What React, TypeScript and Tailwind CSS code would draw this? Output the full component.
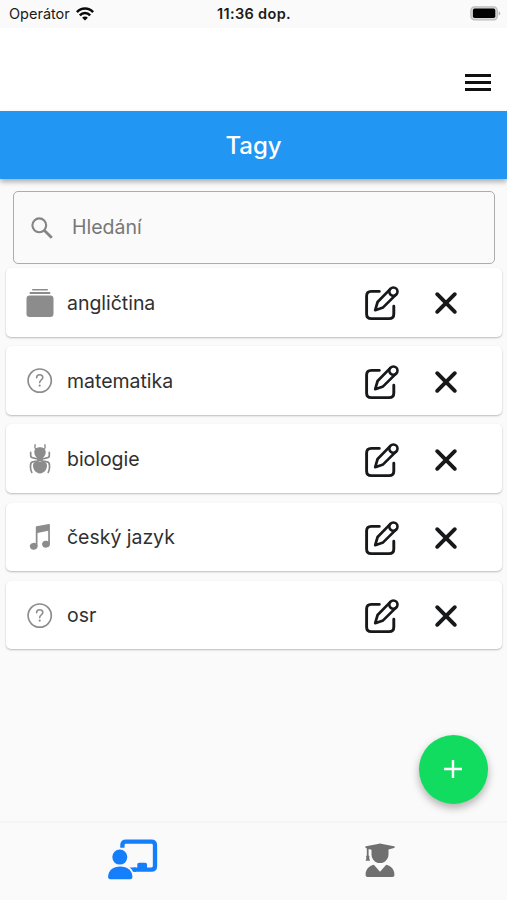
import React, { useState } from 'react';

const initialTags = [
  { id: 1, name: 'angličtina', icon: 'cards' },
  { id: 2, name: 'matematika', icon: 'question' },
  { id: 3, name: 'biologie', icon: 'bug' },
  { id: 4, name: 'český jazyk', icon: 'music' },
  { id: 5, name: 'osr', icon: 'question' },
];

function WifiIcon() {
  return (
    <svg width="18" height="14" viewBox="0 0 18 14" fill="none" stroke="#0a0a0a" strokeWidth="2.5">
      <path d="M0.9 5.1C5.4 0.3 12.6 0.3 17.1 5.1" />
      <path d="M3.8 8.4C6.7 5.3 11.3 5.3 14.2 8.4" />
      <path d="M9 13.6L6.1 10.7C7.7 9.1 10.3 9.1 11.9 10.7Z" fill="#0a0a0a" stroke="none" />
    </svg>
  );
}

function BatteryIcon() {
  return (
    <svg width="31" height="15" viewBox="0 0 31 15">
      <rect x="0.9" y="0.9" width="26.4" height="13" rx="3.6" fill="#d8d8d8" stroke="#bcbcbc" strokeWidth="1.3" />
      <rect x="2.9" y="2.6" width="22.4" height="9.4" rx="1.8" fill="#000" />
      <path d="M28.6 5.2C30.9 6 30.9 8.8 28.6 9.6Z" fill="#b5b5b5" />
    </svg>
  );
}

function EditIcon() {
  return (
    <svg width="36" height="36" viewBox="0 0 36 36" fill="none" stroke="#17181a" strokeWidth="2.9" strokeLinecap="round" strokeLinejoin="round">
      <path d="M15.3 6.4H7.3C4.4 6.4 2.6 8.2 2.6 11.1V28.9C2.6 31.8 4.4 33.6 7.3 33.6H25.1C28 33.6 29.8 31.8 29.8 28.9V21.2" />
      <path d="M26.2 4.1L13.6 17L11.2 25.2L19.1 22.4L32 9.6" strokeWidth="2.7" />
      <circle cx="29.4" cy="6.6" r="4.1" strokeWidth="2.6" />
    </svg>
  );
}

function CloseIcon() {
  return (
    <svg width="24" height="24" viewBox="0 0 24 24" fill="none" stroke="#17181a" strokeWidth="3.9" strokeLinecap="round">
      <path d="M3.2 3.2L20.8 20.8M20.8 3.2L3.2 20.8" />
    </svg>
  );
}

function TagIcon({ type }: { type: string }) {
  if (type === 'cards') {
    return (
      <svg width="28" height="30" viewBox="0 0 28 30" fill="#8c8c8c">
        <rect x="6" y="1" width="16" height="1.5" rx="0.7" />
        <rect x="3.5" y="4.1" width="21" height="1.8" rx="0.9" />
        <rect x="0.5" y="7.6" width="27" height="21.4" rx="3.2" />
      </svg>
    );
  }
  if (type === 'bug') {
    return (
      <svg width="28" height="30" viewBox="0 0 28 30" fill="#8c8c8c">
        <path d="M9.2 0.8C8.2 4.2 9.8 5.3 11.7 5.6M18.8 0.8C19.8 4.2 18.2 5.3 16.3 5.6" fill="none" stroke="#8c8c8c" strokeWidth="1.4" strokeLinecap="round" />
        <path
          d="M4.7 8.4V11.8C4.7 13.4 5.8 13.9 8 14.1L12 15M23.3 8.4V11.8C23.3 13.4 22.2 13.9 20 14.1L16 15M12 17.2L7.5 17.7C5.2 17.9 4.5 19.2 4.5 21.4V23.3C4.5 25.4 5 27.3 5.8 28.4M16 17.2L20.5 17.7C22.8 17.9 23.5 19.2 23.5 21.4V23.3C23.5 25.4 23 27.3 22.2 28.4"
          fill="none"
          stroke="#8c8c8c"
          strokeWidth="1.7"
          strokeLinecap="round"
        />
        <path d="M14 3.3C17.2 3.3 19.7 5 19.7 8C19.7 10 19 12.3 17.3 13.4L16.3 17.5H11.7L10.7 13.4C9 12.3 8.3 10 8.3 8C8.3 5 10.8 3.3 14 3.3Z" />
        <path d="M14 18C17.6 17.2 21 17.6 21 21.2C21 26 17.6 29.4 14 29.4C10.4 29.4 7 26 7 21.2C7 17.6 10.4 17.2 14 18Z" />
      </svg>
    );
  }
  if (type === 'music') {
    return (
      <svg width="28" height="30" viewBox="0 0 28 30" fill="#8c8c8c">
        <path d="M9.8 5.1Q9.8 4.4 10.6 4.2L22.9 2Q23.9 1.9 23.9 2.8V22H22.2V8.8L11.5 11V24.2H9.8Z" />
        <ellipse cx="7.7" cy="24.3" rx="3.9" ry="3.4" transform="rotate(-12 7.7 24.3)" />
        <ellipse cx="20" cy="22.2" rx="3.9" ry="3.4" transform="rotate(-12 20 22.2)" />
      </svg>
    );
  }
  return (
    <svg width="28" height="30" viewBox="0 0 28 30" fill="none" stroke="#8c8c8c" strokeLinecap="round">
      <circle cx="13.7" cy="14.6" r="11.6" strokeWidth="1.7" />
      <path d="M10.6 11.8C10.6 9.9 11.9 8.8 13.7 8.8C15.5 8.8 16.8 9.9 16.8 11.5C16.8 13.7 13.7 13.9 13.7 16.6" strokeWidth="1.6" />
      <circle cx="13.7" cy="19.6" r="1.1" fill="#8c8c8c" stroke="none" />
    </svg>
  );
}

function TeacherIcon() {
  return (
    <svg width="50" height="41" viewBox="0 0 50 41" fill="#157efb">
      <path d="M14.4 8.8V6.2C14.4 4 15.8 2.7 18 2.7H43.4C45.6 2.7 47 4 47 6.2V27C47 29.2 45.6 30.6 43.4 30.6H25.4" fill="none" stroke="#157efb" strokeWidth="4.3" />
      <path d="M29.3 31V25.6C29.3 24.4 30 23.7 31.2 23.7H37.1C38.3 23.7 39 24.4 39 25.6V31Z" />
      <path d="M21.5 28.4H28V32.7H25C24.2 30.8 23.1 29.3 21.5 28.4Z" />
      <circle cx="11.8" cy="18.1" r="7.5" />
      <path d="M0.1 38C0.1 31.3 5.3 27.4 12.2 27.4C19.1 27.4 24.4 31.3 24.4 38C24.4 39.4 23.7 40.2 22.3 40.2H2.2C0.8 40.2 0.1 39.4 0.1 38Z" />
    </svg>
  );
}

function GraduateIcon() {
  return (
    <svg width="30" height="35" viewBox="0 0 30 35" fill="#707070">
      <path d="M1 3.3L14.2 0.7C14.9 0.5 15.3 0.5 16 0.7L29 3.3C30 3.6 30 4.8 29 5.1L23.5 6.5V11.4C23.5 16.2 19.7 20 15 20C10.3 20 6.5 16.2 6.5 11.4V6.7L3.6 6V12.6C4.6 13.4 4.6 14.2 4.2 15L5 17.8H0.6L1.5 15C0.8 14.2 0.9 13.3 1.8 12.6V5.5L1 5.1C0.1 4.8 0.1 3.6 1 3.3Z" />
      <path d="M8.9 21.8L15 28.7L21.2 21.8C26 22.6 29.4 26.7 29.4 31.4V32.1C29.4 33.3 28.6 34.1 27.4 34.1H2.6C1.4 34.1 0.6 33.3 0.6 32.1V31.4C0.6 26.7 4.1 22.6 8.9 21.8Z" />
    </svg>
  );
}

export default function App() {
  const [tags, setTags] = useState(initialTags);
  const [search, setSearch] = useState('');

  const filtered = tags.filter(t => t.name.toLowerCase().includes(search.toLowerCase()));

  return (
    <div className="flex flex-col h-screen w-full bg-[#fafafa] overflow-hidden font-['Inter',sans-serif] text-[#303030]">
      <div className="grid grid-cols-3 items-center h-7 shrink-0 pl-[9px] pr-[6px] text-[#1b1b1b]">
        <div className="flex items-center gap-[6px]">
          <span className="text-[14.5px]">Operátor</span>
          <WifiIcon />
        </div>
        <span className="text-center text-[14.5px] font-semibold tracking-[0.35px] whitespace-nowrap pr-[2px]">11:36 dop.</span>
        <div className="flex justify-end pb-[2px]">
          <BatteryIcon />
        </div>
      </div>

      <div className="flex justify-end items-start h-[83px] shrink-0 bg-white pr-4 pt-[46px]">
        <button title="Menu" className="flex flex-col gap-1">
          <span className="block w-[26px] h-[3px] bg-[#101010]" />
          <span className="block w-[26px] h-[3px] bg-[#101010]" />
          <span className="block w-[26px] h-[3px] bg-[#101010]" />
        </button>
      </div>

      <header className="flex items-center justify-center h-[68px] shrink-0 bg-[#2196f3] pt-[2px] shadow-[0_3px_5px_rgba(0,0,0,0.3)]">
        <h1 className="text-white text-[24px] font-medium">Tagy</h1>
      </header>

      <main className="flex-1 min-h-0 flex flex-col">
        <label className="flex items-center ml-[13px] mr-[12px] mt-[12px] h-[73px] shrink-0 border-[1.5px] border-[#acacac] rounded-[5px]">
          <svg className="ml-[17px] shrink-0" width="22" height="22" viewBox="0 0 22 22" fill="none" stroke="#858585" strokeWidth="2.1">
            <circle cx="8.3" cy="8.3" r="6.9" />
            <path d="M13.4 13.4L20.8 20.8" strokeWidth="2.8" />
          </svg>
          <input
            type="text"
            placeholder="Hledání"
            value={search}
            onChange={(e) => setSearch(e.target.value)}
            className="ml-[19px] flex-1 min-w-0 text-[19.5px] placeholder:text-[#777] focus:outline-none"
          />
        </label>

        <div className="flex flex-col gap-[9.5px] pl-[6px] pr-[5px] mt-[4px]">
          {filtered.map(tag => (
            <div key={tag.id} className="flex items-center h-[68.7px] shrink-0 bg-white rounded-[5px] pl-5 pt-[2px] shadow-[0_1px_2px_rgba(0,0,0,0.26)]">
              <div className="pb-[1px]">
                <TagIcon type={tag.icon} />
              </div>
              <span className="ml-[13px] flex-1 text-[19.5px] tracking-[-0.03px]">{tag.name}</span>
              <button title="Upravit" className="mr-[34px]">
                <EditIcon />
              </button>
              <button title="Smazat" className="mr-[44.5px]" onClick={() => setTags(prev => prev.filter(t => t.id !== tag.id))}>
                <CloseIcon />
              </button>
            </div>
          ))}
        </div>

        <button title="Přidat" className="mt-auto ml-auto mr-[19.5px] mb-[17.5px] w-[69px] h-[69px] shrink-0 rounded-full bg-[#12dc60] flex items-center justify-center shadow-[0_4px_8px_rgba(0,0,0,0.3)]">
          <svg width="18" height="18" viewBox="0 0 18 18" stroke="#fff" strokeWidth="2.4">
            <path d="M9 0V18M0 9H18" />
          </svg>
        </button>
      </main>

      <nav className="grid grid-cols-2 h-[79px] shrink-0 border-t-2 border-[#f5f5f5] bg-[#fafafa]">
        <button title="Učitel" className="flex justify-center pt-4 pl-[12px] items-start">
          <TeacherIcon />
        </button>
        <button title="Žák" className="flex justify-center pt-5 items-start">
          <GraduateIcon />
        </button>
      </nav>
    </div>
  );
}
